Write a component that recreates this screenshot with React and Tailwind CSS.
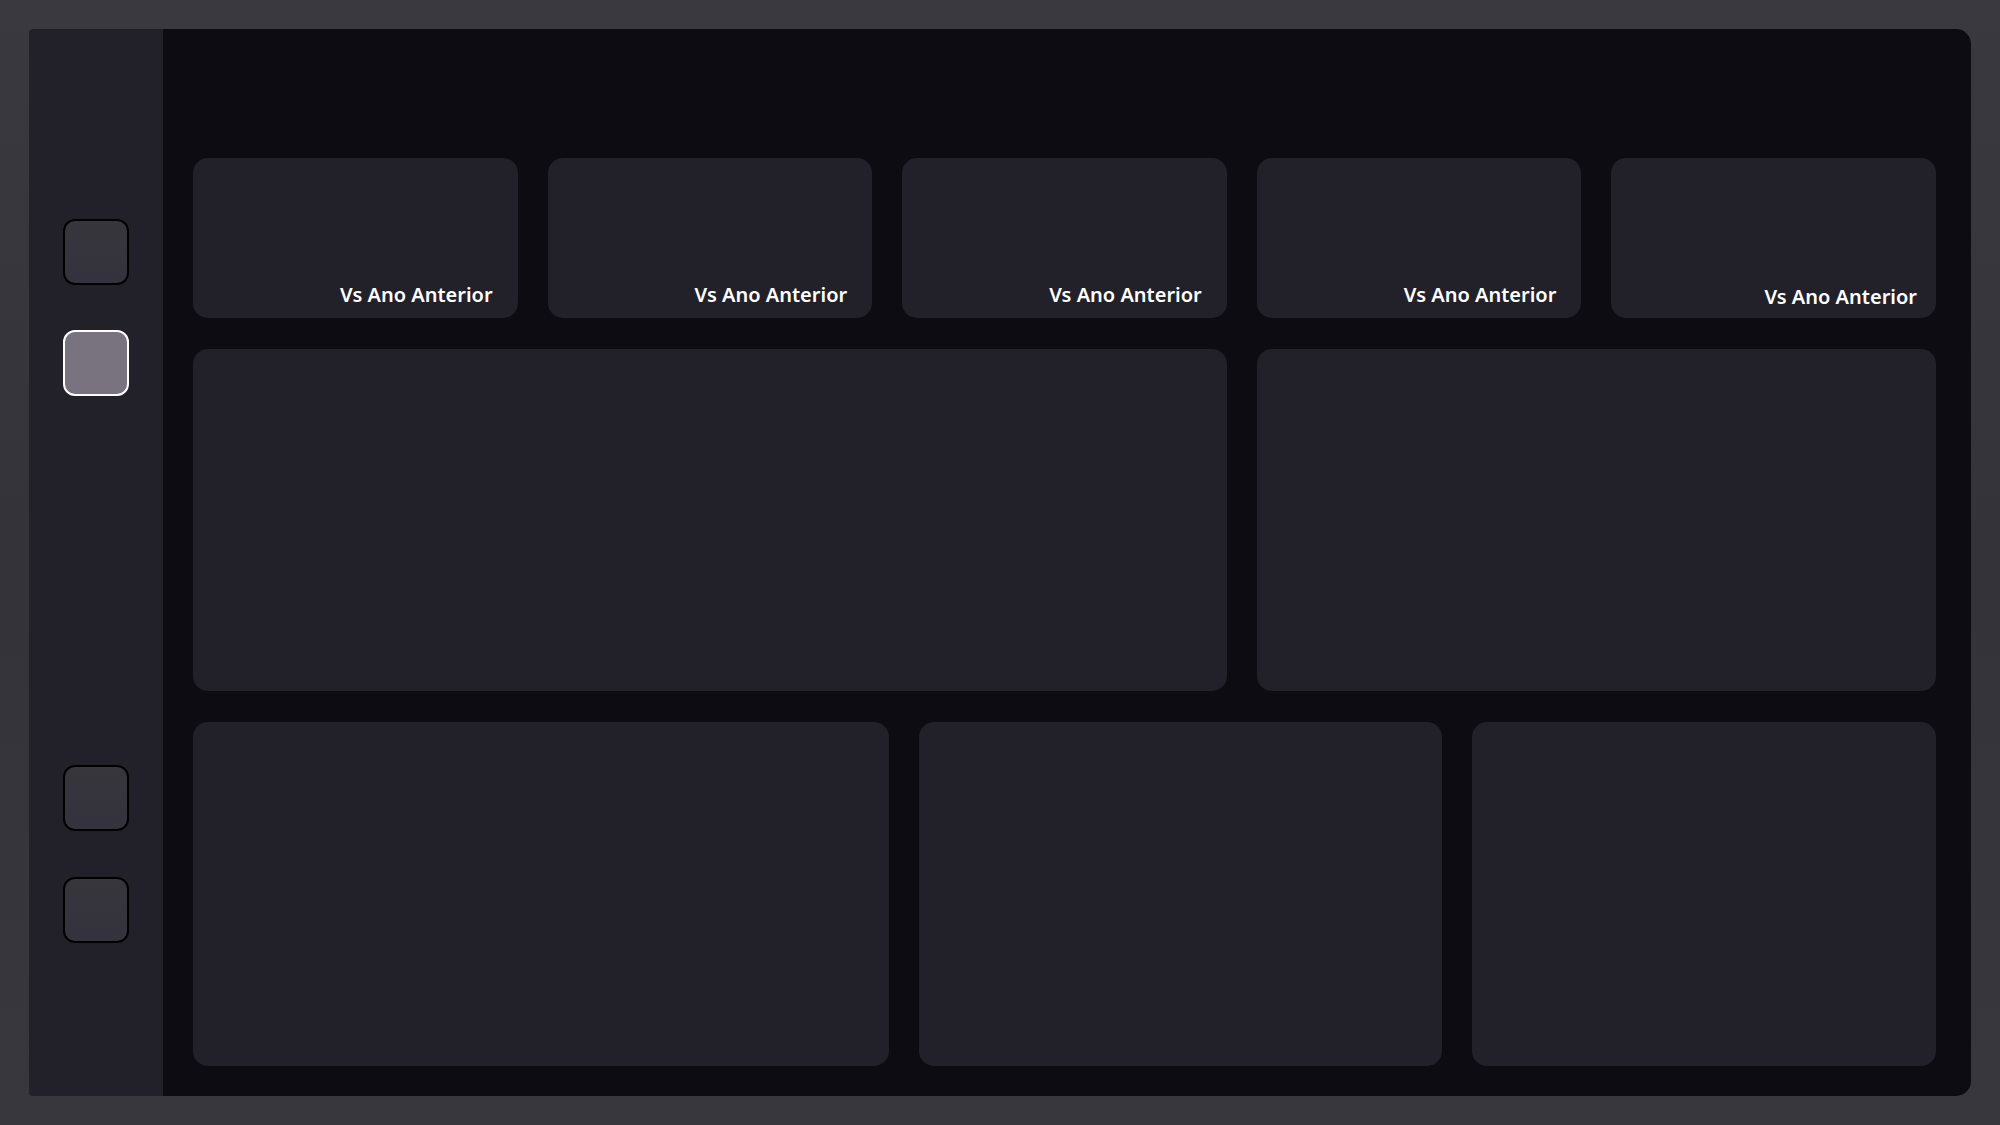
export default function App() {
  const top = [0, 1, 2, 3, 4];
  return (
    <div className="w-[2000px] h-[1125px] bg-[linear-gradient(180deg,#3a393f_0%,#343339_50%,#38373d_100%)] p-[29px] flex" style={{ fontFamily: '"Noto Sans", "Open Sans", sans-serif' }}>
      <div className="flex flex-1 rounded-l-[4px] rounded-r-[15px] overflow-hidden">
        <div className="w-[134px] bg-[#22212a] flex flex-col items-center pt-[190px] pb-[153px]">
          <div className="w-[66px] h-[66px] rounded-[12px] border-2 border-black bg-[linear-gradient(180deg,#37363c,#34323d)]" />
          <div className="mt-[45px] w-[66px] h-[66px] rounded-[12px] border-2 border-white bg-[#78737f]" />
          <div className="mt-auto w-[66px] h-[66px] rounded-[12px] border-2 border-black bg-[linear-gradient(180deg,#37363c,#34323d)]" />
          <div className="mt-[46px] w-[66px] h-[66px] rounded-[12px] border-2 border-black bg-[linear-gradient(180deg,#37363c,#34323d)]" />
        </div>
        <div className="flex-1 bg-[#0d0c12] pl-[30px] pr-[35px] pt-[129px] pb-[30px] flex flex-col">
          <div className="grid grid-cols-5 gap-x-[30px] h-[160px]">
            {top.map((i) => (
              <div
                key={i}
                className={
                  i === 4
                    ? "bg-[#22212a] rounded-[15px] flex items-end justify-end pr-[19px] pb-[7px]"
                    : "bg-[#22212a] rounded-[15px] flex items-end justify-end pr-[25px] pb-[9px]"
                }
              >
                <span className="text-white text-[20px] font-semibold leading-[28px]">Vs Ano Anterior</span>
              </div>
            ))}
          </div>
          <div className="grid grid-cols-5 gap-x-[30px] h-[342px] mt-[31px]">
            <div className="col-span-3 bg-[#22212a] rounded-[15px]" />
            <div className="col-span-2 bg-[#22212a] rounded-[15px]" />
          </div>
          <div className="grid grid-cols-[695fr_523fr_463fr] gap-x-[30px] flex-1 mt-[31px]">
            <div className="bg-[#22212a] rounded-[15px]" />
            <div className="bg-[#22212a] rounded-[15px]" />
            <div className="bg-[#22212a] rounded-[15px]" />
          </div>
        </div>
      </div>
    </div>
  );
}
